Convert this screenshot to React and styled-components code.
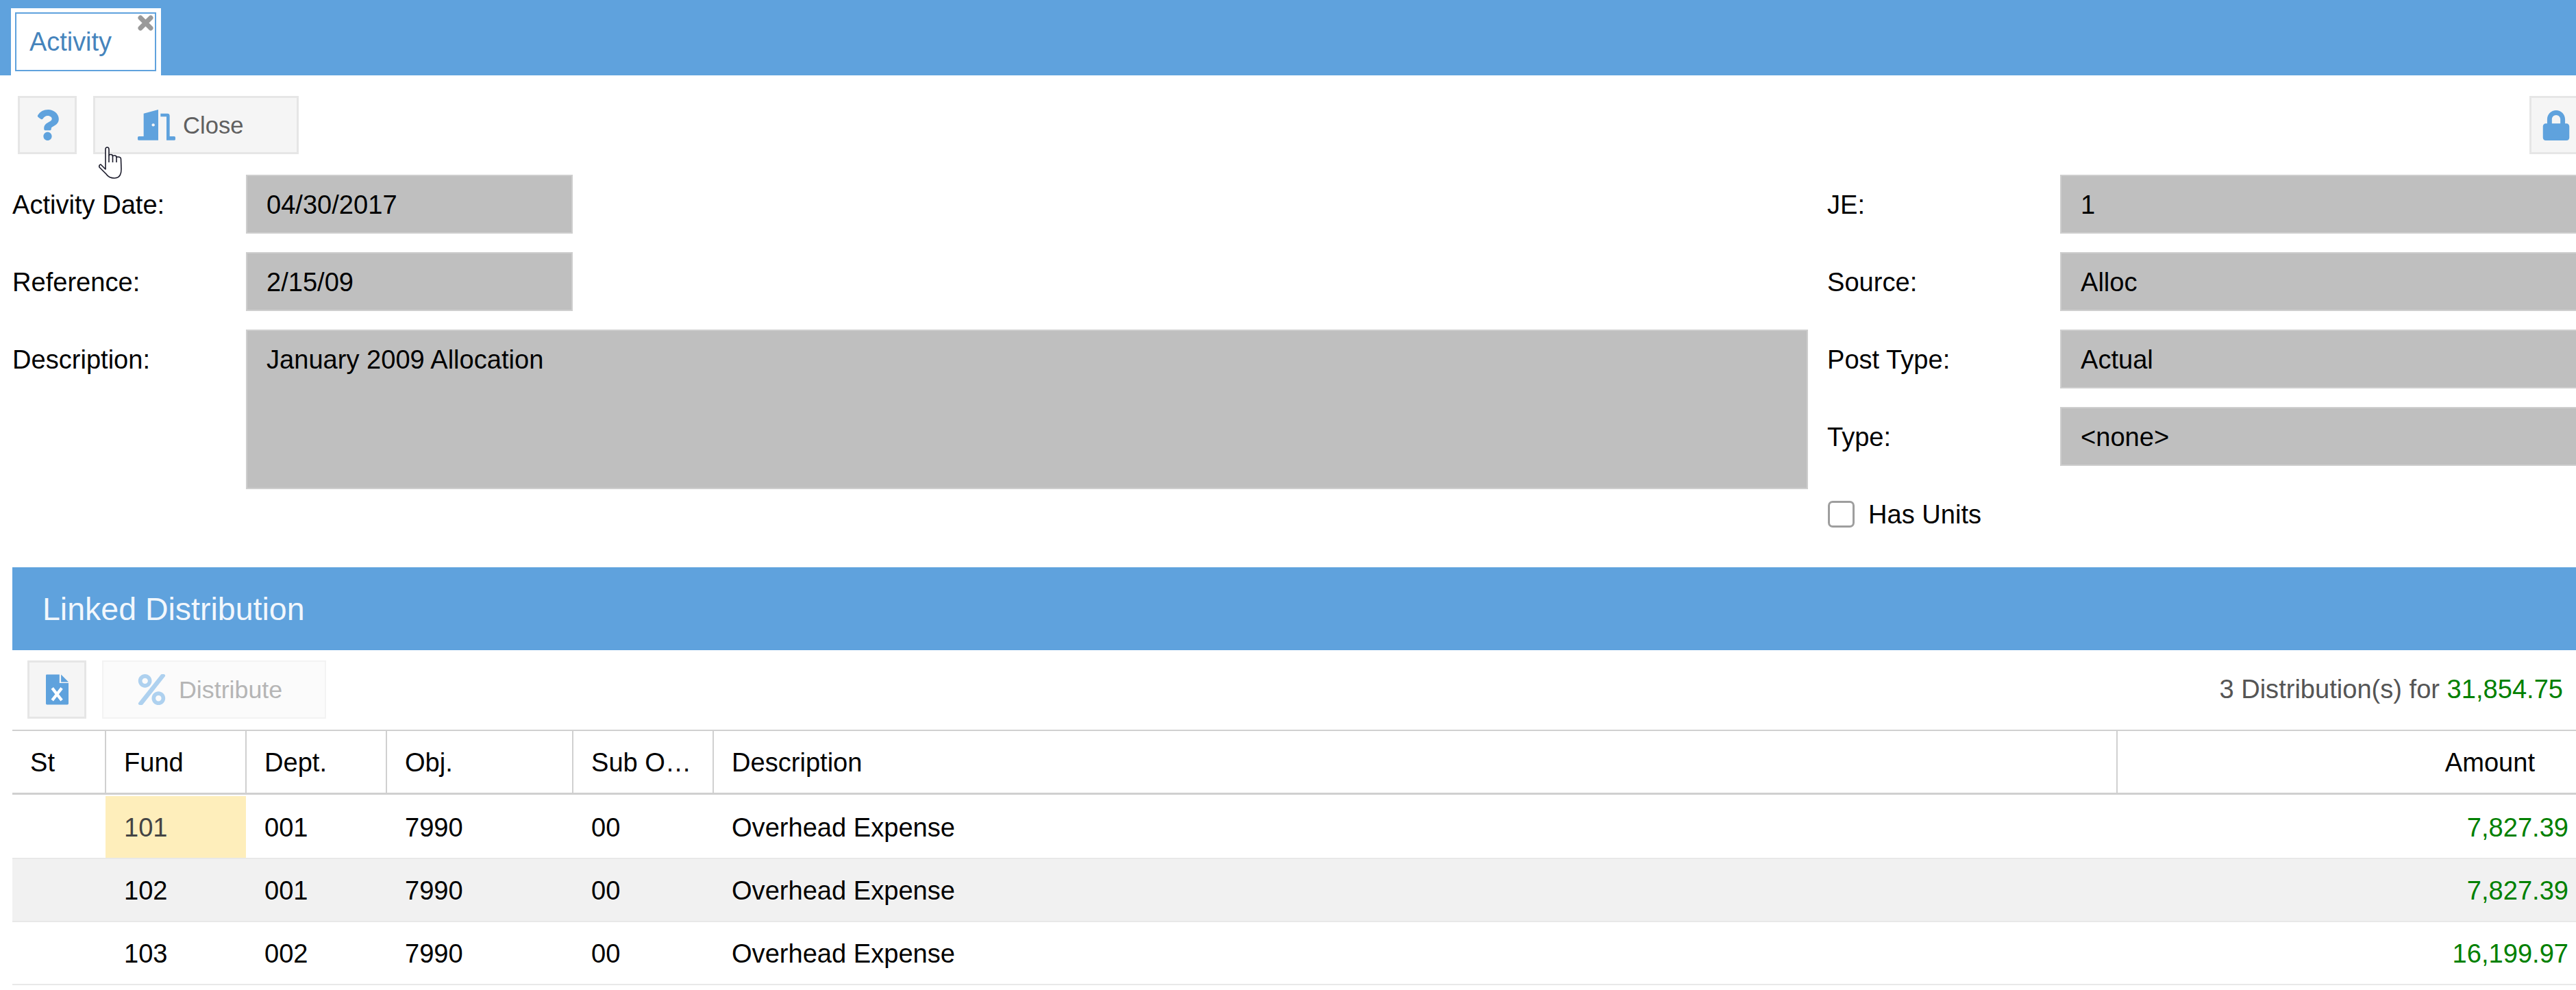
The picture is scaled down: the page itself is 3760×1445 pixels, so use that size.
import React from 'react'
import styled, { createGlobalStyle } from 'styled-components'
import { FaQuestion, FaLock, FaPercent } from 'react-icons/fa'

const BLUE = '#5fa2dd'
const GREEN = '#008000'

const GlobalStyle = createGlobalStyle`
    html, body {
        margin: 0;
        padding: 0;
        background: #fff;
        overflow: hidden;
    }
    body {
        font-family: "Liberation Sans", Arial, sans-serif;
        font-size: 38.1px;
        color: #000;
    }
    * {
        box-sizing: border-box;
    }
`

const Page = styled.div`
    position: relative;
    width: 3760px;
    height: 1445px;
    overflow: hidden;
`

const TabBar = styled.div`
    height: 110px;
    background: ${BLUE};
    padding: 12px 0 0 16px;
`

const Tab = styled.div`
    position: relative;
    width: 219px;
    height: 98px;
    background: #fff;
    padding: 6px 7px 6px 6px;
`

const TabInner = styled.div`
    height: 86px;
    display: flex;
    align-items: center;
    padding-left: 19px;
    border: 2px solid ${BLUE};
    color: #4584bc;
    font-size: 37.9px;
`

const TabClose = styled.svg`
    position: absolute;
    left: 185px;
    top: 10px;
    width: 23px;
    height: 23px;
`

const Toolbar = styled.div`
    display: flex;
    align-items: flex-start;
    gap: 24px;
    padding: 30px 0 30px 26px;
`

const Button = styled.div`
    height: 85px;
    display: flex;
    align-items: center;
    flex: none;
    width: ${(p) => p.$width}px;
    padding-left: ${(p) => p.$pad}px;
    gap: ${(p) => p.$gap || 0}px;
    background: ${(p) => (p.$disabled ? '#fbfbfb' : '#f5f5f5')};
    border: ${(p) => (p.$disabled ? '2px solid #f3f3f3' : '3px solid #e6e6e6')};
    color: ${(p) => (p.$disabled ? '#b5b5b5' : '#606060')};
    svg {
        flex: none;
        color: ${(p) => (p.$disabled ? '#aed1ef' : BLUE)};
    }
`

const ButtonText = styled.span`
    padding-top: 2px;
    font-size: ${(p) => p.$size}px;
`

const LockButton = styled(Button)`
    margin-left: auto;
    margin-right: -18px;
`

const Form = styled.div`
    display: flex;
    gap: 28px;
    padding-left: 18px;
    height: 573px;
`

const LeftColumn = styled.div`
    flex: none;
    width: 2621px;
    display: flex;
    flex-direction: column;
    gap: 27px;
`

const RightColumn = styled.div`
    flex: none;
    width: 1200px;
    display: flex;
    flex-direction: column;
    gap: 27px;
`

const Field = styled.div`
    display: flex;
    align-items: flex-start;
`

const Label = styled.div`
    flex: none;
    width: ${(p) => p.$width}px;
    height: 86px;
    line-height: 88px;
`

const Value = styled.div`
    height: ${(p) => p.$height || 86}px;
    width: ${(p) => (p.$width ? `${p.$width}px` : 'auto')};
    flex: ${(p) => (p.$width ? 'none' : '1')};
    padding-left: 28px;
    line-height: 84px;
    background: #bfbfbf;
    border: 2px solid #cecece;
`

const CheckRow = styled.label`
    display: flex;
    align-items: center;
    gap: 20px;
    margin: 24px 0 0 1px;
    height: 39px;
`

const CheckBox = styled.input`
    appearance: none;
    flex: none;
    width: 39px;
    height: 39px;
    margin: 0;
    background: #fff;
    border: 3px solid #9e9e9e;
    border-radius: 7px;
`

const CheckText = styled.span`
    padding-top: 2px;
`

const Section = styled.div`
    margin-left: 18px;
`

const SectionHeader = styled.div`
    height: 121px;
    display: flex;
    align-items: center;
    padding-left: 44px;
    background: ${BLUE};
    color: #f2f7fc;
    font-size: 46.5px;
`

const GridBar = styled.div`
    display: flex;
    align-items: center;
    gap: 23px;
    padding: 15px 19px 16px 22px;
`

const Summary = styled.div`
    margin-left: auto;
    color: #555;
`

const Money = styled.span`
    color: ${GREEN};
`

const HeadRow = styled.div`
    display: grid;
    grid-template-columns: 137px 205px 205px 272px 205px 2049px 1fr;
    height: 95px;
    border-top: 2px solid #d0d0d0;
    border-bottom: 3px solid #d0d0d0;
`

const HeadCell = styled.div`
    display: flex;
    align-items: center;
    justify-content: ${(p) => (p.$right ? 'flex-end' : 'flex-start')};
    padding: ${(p) => (p.$right ? '2px 60px 0 0' : '2px 0 0 26px')};
    border-right: ${(p) => (p.$right ? 'none' : '2px solid #d0d0d0')};
`

const Body = styled.div`
    padding-top: 2px;
`

const Row = styled.div`
    display: grid;
    grid-template-columns: 136px 205px 205px 272px 205px 2049px 1fr;
    height: 92px;
    background: ${(p) => (p.$alt ? '#f1f1f1' : '#fff')};
    border-bottom: 2px solid #e8e8e8;
`

const Cell = styled.div`
    display: flex;
    align-items: center;
    justify-content: ${(p) => (p.$right ? 'flex-end' : 'flex-start')};
    padding: ${(p) => (p.$right ? '2px 11px 0 0' : '2px 0 0 27px')};
    background: ${(p) => (p.$selected ? '#feeebb' : 'transparent')};
    color: ${(p) => (p.$right ? GREEN : p.$selected ? '#444' : '#000')};
`

const HandCursor = styled.svg`
    position: absolute;
    left: 143px;
    top: 214px;
    width: 35px;
    height: 47px;
`

const columns = ['St', 'Fund', 'Dept.', 'Obj.', 'Sub O…', 'Description']

const rows = [
    { fund: '101', dept: '001', amount: '7,827.39' },
    { fund: '102', dept: '001', amount: '7,827.39' },
    { fund: '103', dept: '002', amount: '16,199.97' },
]

const DoorIcon = () => (
    <svg width="55" height="45" viewBox="0 0 165 135" fill="currentColor">
        <path d="M26 17 L90 0 V134 H4 Q0 134 0 130 V122 Q0 117 5 117 H26 Z" />
        <circle cx="68" cy="67" r="6.5" fill="#f5f5f5" />
        <path d="M100 17 H130 Q140 17 140 27 V117 H160 Q165 117 165 122 V130 Q165 134 161 134 H126 V31 H100 Z" />
    </svg>
)

const ExcelIcon = () => (
    <svg width="33" height="45" viewBox="0 0 100 133">
        <path
            fill="currentColor"
            d="M4 0 H60 V38 H100 V128 Q100 133 95 133 H4 Q0 133 0 128 V4 Q0 0 4 0 Z M67 0 L100 33 H67 Z"
        />
        <path stroke="#fff" strokeWidth="13" d="M28 60 L70 114 M70 60 L28 114" />
    </svg>
)

const Index = () => {
    return (
        <Page>
            <GlobalStyle />
            <TabBar>
                <Tab>
                    <TabInner>Activity</TabInner>
                    <TabClose viewBox="0 0 23 23">
                        <path
                            d="M4 4 L19 19 M19 4 L4 19"
                            stroke="#999"
                            strokeWidth="7"
                            strokeLinecap="round"
                        />
                    </TabClose>
                </Tab>
            </TabBar>

            <Toolbar>
                <Button $width={86} $pad={18}>
                    <FaQuestion size={45} />
                </Button>
                <Button $width={300} $pad={62} $gap={11}>
                    <DoorIcon />
                    <ButtonText $size={34.6}>Close</ButtonText>
                </Button>
                <LockButton $width={86} $pad={14}>
                    <FaLock size={44} />
                </LockButton>
            </Toolbar>

            <Form>
                <LeftColumn>
                    <Field>
                        <Label $width={341}>Activity Date:</Label>
                        <Value $width={477}>04/30/2017</Value>
                    </Field>
                    <Field>
                        <Label $width={341}>Reference:</Label>
                        <Value $width={477}>2/15/09</Value>
                    </Field>
                    <Field>
                        <Label $width={341}>Description:</Label>
                        <Value $height={233}>January 2009 Allocation</Value>
                    </Field>
                </LeftColumn>
                <RightColumn>
                    <Field>
                        <Label $width={340}>JE:</Label>
                        <Value>1</Value>
                    </Field>
                    <Field>
                        <Label $width={340}>Source:</Label>
                        <Value>Alloc</Value>
                    </Field>
                    <Field>
                        <Label $width={340}>Post Type:</Label>
                        <Value>Actual</Value>
                    </Field>
                    <Field>
                        <Label $width={340}>Type:</Label>
                        <Value>&lt;none&gt;</Value>
                    </Field>
                    <CheckRow>
                        <CheckBox type="checkbox" readOnly />
                        <CheckText>Has Units</CheckText>
                    </CheckRow>
                </RightColumn>
            </Form>

            <Section>
                <SectionHeader>Linked Distribution</SectionHeader>
                <GridBar>
                    <Button $width={86} $pad={24}>
                        <ExcelIcon />
                    </Button>
                    <Button $width={327} $pad={48} $gap={17} $disabled>
                        <FaPercent size={45} />
                        <ButtonText $size={35.8}>Distribute</ButtonText>
                    </Button>
                    <Summary>
                        3 Distribution(s) for <Money>31,854.75</Money>
                    </Summary>
                </GridBar>

                <HeadRow>
                    {columns.map((name) => (
                        <HeadCell key={name}>{name}</HeadCell>
                    ))}
                    <HeadCell $right>Amount</HeadCell>
                </HeadRow>
                <Body>
                    {rows.map((row, i) => (
                        <Row key={row.fund} $alt={i === 1}>
                            <Cell />
                            <Cell $selected={i === 0}>{row.fund}</Cell>
                            <Cell>{row.dept}</Cell>
                            <Cell>7990</Cell>
                            <Cell>00</Cell>
                            <Cell>Overhead Expense</Cell>
                            <Cell $right>{row.amount}</Cell>
                        </Row>
                    ))}
                </Body>
            </Section>

            <HandCursor viewBox="-1 -1 35 47">
                <path
                    fill="#fff"
                    stroke="#1a1a2a"
                    strokeWidth="1.6"
                    strokeLinejoin="round"
                    d="M10 3 Q10 0 12.5 0 Q15 0 15 3 L15 12 Q15 10.5 17.5 10.5 Q20.5 10.5 20.5 13 Q20.5 12 23 12 Q26 12 26 14.5 Q26 14 28 14 Q32.5 14 32.5 17 L33 32 Q33 45 23 45 Q15 45 11 39 L1 29 Q0 26 3 25 L10 32 Z"
                />
                <path
                    fill="none"
                    stroke="#1a1a2a"
                    strokeWidth="1.6"
                    d="M15 12 L15 22 M20.5 13 L20.5 22 M26 14.5 L26 22"
                />
            </HandCursor>
        </Page>
    )
}

export default Index
